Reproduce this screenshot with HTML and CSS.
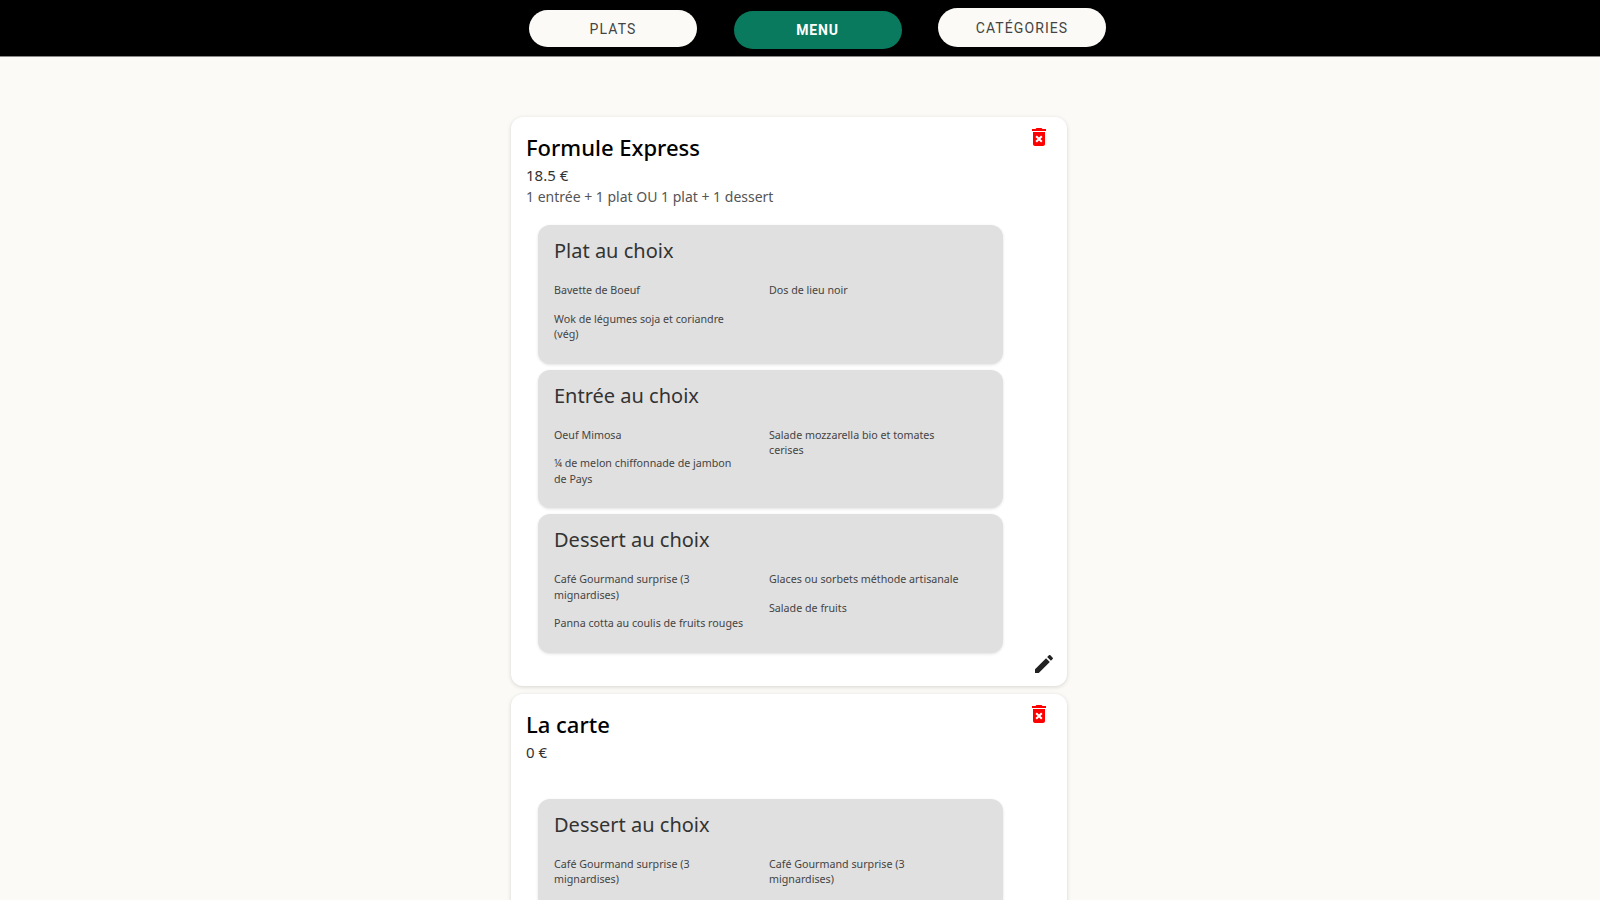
FILE: index.html

```html
<!DOCTYPE html>
<html lang="fr">
<head>
  <meta charset="UTF-8" />
  <meta name="viewport" content="width=device-width, initial-scale=1.0"/>
  <title>Menus</title>
  <link rel="stylesheet" href="styles.css">
</head>
<body>

  <header class="topbar">
    <button class="tab tab-plats">Plats</button>
    <button class="tab tab-menu">Menu</button>
    <button class="tab tab-cat">Catégories</button>
  </header>

  <main class="menu-list">

    <!-- Formule Express -->
    <article class="menu-card">
      <svg class="icon icon-delete" viewBox="0 0 24 24"><path d="M6 19c0 1.1.9 2 2 2h8c1.1 0 2-.9 2-2V7H6v12zm2.46-7.12 1.41-1.41L12 12.59l2.12-2.12 1.41 1.41L13.41 14l2.12 2.12-1.41 1.41L12 15.41l-2.12 2.12-1.41-1.41L10.59 14l-2.13-2.12zM15.5 4l-1-1h-5l-1 1H5v2h14V4z"/></svg>
      <h2>Formule Express</h2>
      <p class="price">18.5 €</p>
      <p class="desc">1 entrée + 1 plat OU 1 plat + 1 dessert</p>

      <section class="group">
        <h3>Plat au choix</h3>
        <div class="columns">
          <ul>
            <li>Bavette de Boeuf</li>
            <li>Wok de légumes soja et coriandre (vég)</li>
          </ul>
          <ul>
            <li>Dos de lieu noir</li>
          </ul>
        </div>
      </section>

      <section class="group">
        <h3>Entrée au choix</h3>
        <div class="columns">
          <ul>
            <li>Oeuf Mimosa</li>
            <li>¼ de melon chiffonnade de jambon de Pays</li>
          </ul>
          <ul>
            <li>Salade mozzarella bio et tomates cerises</li>
          </ul>
        </div>
      </section>

      <section class="group">
        <h3>Dessert au choix</h3>
        <div class="columns">
          <ul>
            <li>Café Gourmand surprise (3 mignardises)</li>
            <li>Panna cotta au coulis de fruits rouges</li>
          </ul>
          <ul>
            <li>Glaces ou sorbets méthode artisanale</li>
            <li>Salade de fruits</li>
          </ul>
        </div>
      </section>

      <svg class="icon icon-edit" viewBox="0 0 24 24"><path d="M3 17.25V21h3.75L17.81 9.94l-3.75-3.75L3 17.25zM20.71 7.04c.39-.39.39-1.02 0-1.41l-2.34-2.34c-.39-.39-1.02-.39-1.41 0l-1.83 1.83 3.75 3.75 1.83-1.83z"/></svg>
    </article>

    <!-- La carte -->
    <article class="menu-card">
      <svg class="icon icon-delete" viewBox="0 0 24 24"><path d="M6 19c0 1.1.9 2 2 2h8c1.1 0 2-.9 2-2V7H6v12zm2.46-7.12 1.41-1.41L12 12.59l2.12-2.12 1.41 1.41L13.41 14l2.12 2.12-1.41 1.41L12 15.41l-2.12 2.12-1.41-1.41L10.59 14l-2.13-2.12zM15.5 4l-1-1h-5l-1 1H5v2h14V4z"/></svg>
      <h2>La carte</h2>
      <p class="price">0 €</p>
      <p class="desc"></p>

      <section class="group">
        <h3>Dessert au choix</h3>
        <div class="columns">
          <ul>
            <li>Café Gourmand surprise (3 mignardises)</li>
          </ul>
          <ul>
            <li>Café Gourmand surprise (3 mignardises)</li>
          </ul>
        </div>
      </section>
    </article>

  </main>

</body>
</html>
```

FILE: styles.css

```css
* {
  box-sizing: border-box;
  margin: 0;
  padding: 0;
}

html, body {
  height: 100%;
  overflow: hidden;
}

body {
  font-family: "Noto Sans", "Open Sans", sans-serif;
  background-color: #fbfaf6;
  color: #000;
}

/* Top bar */
.topbar {
  display: flex;
  align-items: flex-start;
  justify-content: center;
  gap: 36.5px;
  height: 57px;
  padding-left: 35px;
  background-color: #000;
  border-bottom: 1px solid #888;
}

.tab {
  width: 168px;
  border: none;
  border-radius: 20px;
  background-color: #fbfaf6;
  color: #444;
  font-family: Roboto, sans-serif;
  font-size: 14px;
  font-weight: 400;
  letter-spacing: 1.1px;
  text-transform: uppercase;
}

.tab-plats {
  height: 37px;
  margin-top: 10px;
}

.tab-menu {
  height: 38px;
  margin-top: 11px;
  background-color: #0a7a5e;
  color: #fff;
  font-weight: 700;
  letter-spacing: 0.8px;
}

.tab-cat {
  height: 39px;
  margin-top: 8px;
}

/* Cards */
.menu-list {
  display: flex;
  flex-direction: column;
  align-items: center;
  gap: 8px;
  padding: 60px 22px 0 0;
}

.menu-card {
  position: relative;
  width: 556px;
  padding: 15px 64px 33px 15px;
  background-color: #fff;
  border-radius: 12px;
  box-shadow: 0 1px 4px rgba(0, 0, 0, 0.15);
}

.menu-card h2 {
  font-size: 22px;
  font-weight: 500;
  line-height: 30px;
}

.price {
  font-size: 15px;
  line-height: 20px;
  margin-top: 3px;
  color: #333;
}

.desc {
  height: 20px;
  margin: 2px 0 18px;
  font-size: 14px;
  line-height: 20px;
  color: #555;
}

.desc:empty {
  height: 17px;
}

.icon {
  position: absolute;
  width: 24px;
  height: 24px;
}

.icon-delete {
  top: 8px;
  right: 16px;
  fill: #f00;
}

.icon-edit {
  right: 11px;
  bottom: 10px;
  fill: #222;
}

/* Choice groups */
.group {
  margin-left: 12px;
  padding: 12px 16px 21px;
  background-color: #e0e0e0;
  border-radius: 12px;
  box-shadow: 0 1px 3px rgba(0, 0, 0, 0.12);
}

.group + .group {
  margin-top: 6px;
}

.group h3 {
  font-size: 20px;
  font-weight: 400;
  line-height: 28px;
  margin-bottom: 18px;
  color: #333;
}

.columns {
  display: flex;
}

.columns ul {
  display: flex;
  flex-direction: column;
  gap: 13px;
  width: 215px;
  list-style: none;
}

.columns li {
  max-width: 192px;
  font-size: 10.7px;
  line-height: 15.5px;
  color: #444;
}
```
